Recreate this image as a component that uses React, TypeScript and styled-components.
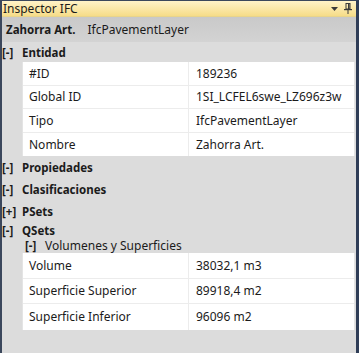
import { FC } from "react";
import styled, { createGlobalStyle } from "styled-components";

const GlobalStyle = createGlobalStyle`
  html, body {
    margin: 0;
    padding: 0;
    background: #dcdcdc;
  }
  body {
    font-family: "Noto Sans", "Open Sans", sans-serif;
    font-size: 12px;
    color: #1b1b1b;
  }
`;

const Window = styled.div`
  width: 359px;
  height: 353px;
  box-sizing: border-box;
  display: flex;
  flex-direction: column;
  background: #dcdcdc;
  border-left: 2px solid #3b475c;
  border-right: 3px solid #2f3d57;
  border-top: 1px solid #3b475c;
  overflow: hidden;
`;

const TitleBar = styled.div`
  height: 15px;
  display: flex;
  align-items: center;
  justify-content: space-between;
  padding: 0 4px 0 1px;
  background: linear-gradient(#fff3c8, #f6dc88);
  border-bottom: 1px solid #e8d48c;
`;

const TitleText = styled.span`
  font-size: 12px;
  line-height: 15px;
`;

const TitleButtons = styled.div`
  display: flex;
  align-items: center;
  gap: 6px;
`;

const ObjectHeader = styled.div`
  height: 25px;
  display: flex;
  align-items: center;
  gap: 12px;
  padding: 0 4px;
  background: linear-gradient(#c9c9c9, #d3d3d3);
`;

const ObjectName = styled.span`
  font-weight: bold;
  font-size: 11.5px;
`;

const Section = styled.div<{ $h: number; $indent?: number; $bold?: boolean }>`
  height: ${(p) => p.$h}px;
  display: flex;
  align-items: center;
  padding-left: ${(p) => p.$indent ?? 0}px;
  font-weight: ${(p) => (p.$bold === false ? "normal" : "bold")};
  font-size: ${(p) => (p.$bold === false ? 12 : 11.5)}px;
  white-space: nowrap;
`;

const Toggle = styled.span`
  font-weight: bold;
  font-size: 11.5px;
  width: 20px;
`;

const PropTable = styled.div`
  margin-left: 20px;
  margin-right: 1px;
  background: #ffffff;
  border-left: 1px solid #e4e4e4;
  border-right: 1px solid #e4e4e4;
`;

const PropRow = styled.div<{ $h: number }>`
  height: ${(p) => p.$h}px;
  box-sizing: border-box;
  display: grid;
  grid-template-columns: 166px 1fr;
  border-bottom: 1px solid #ececec;
  &:last-child {
    border-bottom: none;
  }
`;

const PropLabel = styled.div`
  display: flex;
  align-items: center;
  padding-left: 6px;
  border-right: 1px solid #ececec;
`;

const PropValue = styled.div`
  display: flex;
  align-items: center;
  padding-left: 7px;
  white-space: nowrap;
`;

const PinIcon: FC = () => (
  <svg width="8" height="11" viewBox="0 0 8 11">
    <rect x="2" y="0.5" width="4" height="5.5" fill="none" stroke="#3a3a3a" />
    <rect x="4" y="1" width="1.5" height="5" fill="#3a3a3a" />
    <rect x="0" y="6" width="8" height="1.2" fill="#3a3a3a" />
    <rect x="3.5" y="7" width="1" height="4" fill="#3a3a3a" />
  </svg>
);

const DropIcon: FC = () => (
  <svg width="7" height="4" viewBox="0 0 7 4">
    <path d="M0 0 H7 L3.5 4 Z" fill="#3a3a3a" />
  </svg>
);

type Prop = [string, string];

const entidad: Prop[] = [
  ["#ID", "189236"],
  ["Global ID", "1SI_LCFEL6swe_LZ696z3w"],
  ["Tipo", "IfcPavementLayer"],
  ["Nombre", "Zahorra Art."],
];

const volumenes: Prop[] = [
  ["Volume", "38032,1 m3"],
  ["Superficie Superior", "89918,4 m2"],
  ["Superficie Inferior", "96096 m2"],
];

const Props: FC<{ items: Prop[]; h: number }> = ({ items, h }) => (
  <PropTable>
    {items.map(([label, value]) => (
      <PropRow key={label} $h={h}>
        <PropLabel>{label}</PropLabel>
        <PropValue>{value}</PropValue>
      </PropRow>
    ))}
  </PropTable>
);

const App: FC = () => (
  <>
    <GlobalStyle />
    <Window>
      <TitleBar>
        <TitleText>Inspector IFC</TitleText>
        <TitleButtons>
          <DropIcon />
          <PinIcon />
        </TitleButtons>
      </TitleBar>
      <ObjectHeader>
        <ObjectName>Zahorra Art.</ObjectName>
        <span>IfcPavementLayer</span>
      </ObjectHeader>
      <Section $h={20}>
        <Toggle>[-]</Toggle>Entidad
      </Section>
      <Props items={entidad} h={23.5} />
      <Section $h={23}>
        <Toggle>[-]</Toggle>Propiedades
      </Section>
      <Section $h={21}>
        <Toggle>[-]</Toggle>Clasificaciones
      </Section>
      <Section $h={23}>
        <Toggle>[+]</Toggle>PSets
      </Section>
      <Section $h={15}>
        <Toggle>[-]</Toggle>QSets
      </Section>
      <Section $h={15} $indent={23} $bold={false}>
        <Toggle>[-]</Toggle>Volumenes y Superficies
      </Section>
      <Props items={volumenes} h={25.5} />
    </Window>
  </>
);

export default App;
